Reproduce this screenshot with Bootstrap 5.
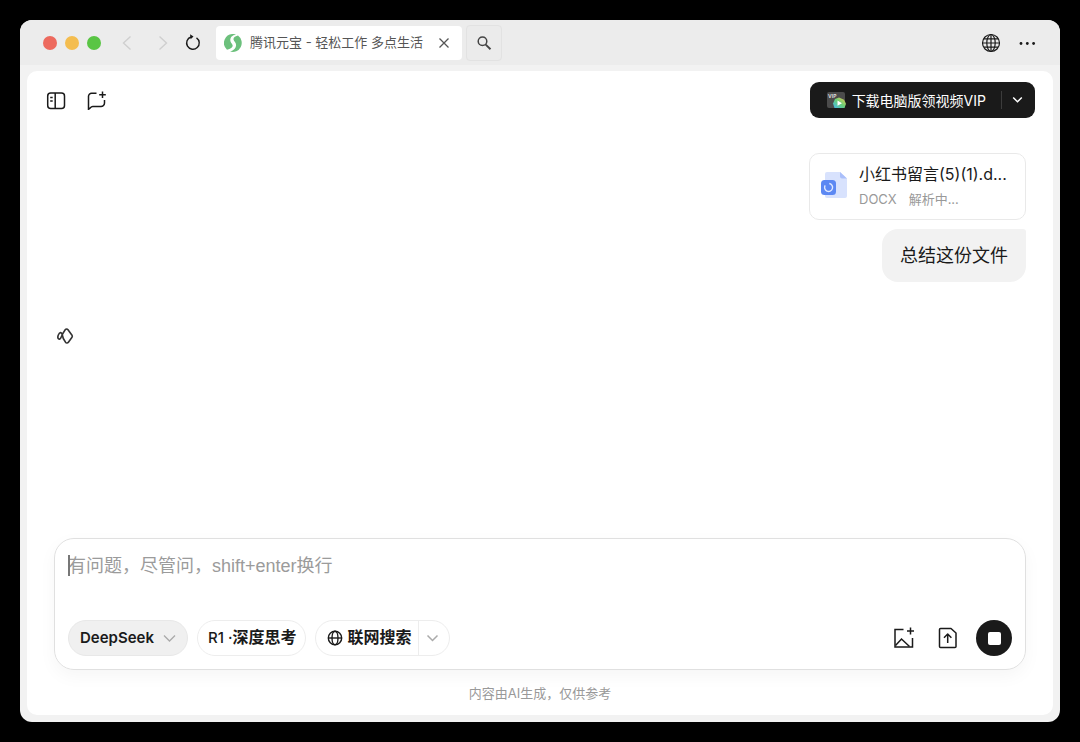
<!DOCTYPE html>
<html lang="zh-CN">
<head>
<meta charset="utf-8">
<meta name="viewport" content="width=device-width, initial-scale=1">
<title>腾讯元宝 - 轻松工作 多点生活</title>
<link href="https://cdn.jsdelivr.net/npm/bootstrap@5.3.0/dist/css/bootstrap.min.css" rel="stylesheet">
<style>
  body { background: #000; color: #1a1a1a; font-family: Inter, "Noto Sans CJK SC", sans-serif; }
  svg { display: block; fill: none; stroke: currentColor; flex: none; }
  svg.solid { stroke: none; }
  .desktop { padding: 20px; }
  .bare { background: none; border: 0; padding: 0; color: inherit; }
  .app-window { background: #f2f2f2; border-radius: 12px; overflow: hidden; }
  .title-bar { background: #ececec; height: 45px; padding: 0 23px; }
  .light { width: 14px; height: 14px; border-radius: 50%; }
  .light-close { background: #ed6a5e; }
  .light-min { background: #f4bd4f; }
  .light-max { background: #59c544; }
  .nav-off { color: #cfcfcf; }
  .tab-item { background: #fff; border-radius: 4px; height: 34px; width: 246px; padding: 0 10px 0 8px; margin-left: 15px; font-size: 13px; color: #555; }
  .search-btn { width: 36px; height: 36px; border: 1px solid #e2e2e2; border-radius: 4px; color: #444; background: #ebebeb; }
  .page-panel { background: #fff; border-radius: 10px; margin: 6px 7px 7px; }
  .page-head { padding: 11px 18px 0 19px; }
  .download { background: #1a1a1a; color: #fff; border-radius: 9px; height: 36px; font-family: Inter, "Noto Sans CJK SC", sans-serif; font-size: 14px; font-weight: 500; }
  .download-main { padding: 0 15px 0 16px; gap: 6px; }
  .download-more { border-left: 1px solid #3c3c3c; height: 18px; padding: 0 12px 0 10px; }
  .chat { padding: 35px 27px 0; }
  .file-card { width: 217px; height: 67px; border: 1px solid #e9e9e9; border-radius: 10px; padding: 0 11px 3px; gap: 11px; }
  .file-name { font-size: 16px; line-height: 24px; }
  .file-meta { font-size: 13px; line-height: 18px; color: #999; margin-top: 4px; gap: 12px; }
  .bubble { background: #f2f2f2; border-radius: 16px 3px 16px 16px; font-size: 18px; line-height: 27px; padding: 13px 18px; margin-top: 9px; }
  .thinking { margin: 45px 0 0 2px; color: #333; }
  .composer { margin: 0 27px; border: 1px solid #e0e0e0; border-radius: 20px; padding: 13px; box-shadow: 0 6px 18px rgba(0,0,0,.04); }
  .caret { left: 0; top: 3px; width: 2px; height: 21px; background: #777; }
  .prompt { border: 0; outline: 0; resize: none; padding: 0; height: 68px; font: 18px/28px "Liberation Sans", "Noto Sans CJK SC", sans-serif; color: #1a1a1a; }
  .prompt::placeholder { color: #9b9b9b; opacity: 1; }
  .pill-row { gap: 9px; }
  .pill { height: 36px; border: 1px solid #ededed; border-radius: 18px; font-size: 15px; font-weight: 600; color: #1a1a1a; background: #fff; }
  .pill-text { font-size: 16px; font-family: "Liberation Sans", "Noto Sans CJK SC", sans-serif; }
  .pill-latin { font-family: Inter, sans-serif; font-size: 15px; font-weight: 500; }
  .pill-model { background: #f0f0f0; border-color: #e8e8e8; padding: 0 11px; gap: 9px; }
  .pill-think { padding: 0 9px 0 10px; }
  .pill-web { padding: 0 6px 0 11px; gap: 4px; }
  .pill-more { border-left: 1px solid #ededed; padding: 0 10px 0 7px; }
  .faint { color: #aaa; }
  .stop { width: 36px; height: 36px; border-radius: 50%; background: #1a1a1a; }
  .stop-mark { width: 13px; height: 13px; border-radius: 2px; background: #fff; }
  .note { font-size: 13px; line-height: 20px; color: #999; padding: 13px 0 12px; }
</style>
</head>
<body>
<div class="desktop min-vh-100 d-flex flex-column">
<div class="app-window flex-grow-1 d-flex flex-column">
  <header class="title-bar d-flex align-items-center">
    <div class="d-flex gap-2">
      <span class="light light-close"></span><span class="light light-min"></span><span class="light light-max"></span>
    </div>
    <nav class="d-flex align-items-center ms-3">
      <button class="bare nav-off ms-1" aria-label="后退"><svg width="12" height="16" stroke-width="1.4"><path d="M9.500 1.500 2.500 8l7 6.500"/></svg></button>
      <button class="bare nav-off ms-4" aria-label="前进"><svg width="12" height="16" stroke-width="1.4"><path d="m2.500 1.500 7 6.500-7 6.500"/></svg></button>
      <button class="bare ms-3" aria-label="刷新"><svg width="16" height="18" stroke-width="1.4"><path d="M11.500 3.800A6.300 6.300 0 1 1 6 3"/><path d="M5 .3 8.500 2.500 5.700 5.300z" fill="currentColor" stroke="none"/></svg></button>
    </nav>
    <div class="tab-item d-flex align-items-center">
      <svg class="solid" width="18" height="18" viewBox="0 0 18 18"><path d="M9.500 0A9 9 0 0 0 3 15.700C7 14.500 9 13 8.600 11.200 8.200 9.500 6.200 8.500 6.300 6 6.400 3.500 8 1.500 12 .6A9 9 0 0 0 9.500 0z" fill="#6cc07c"/><path d="M14 1.600C10.500 2.400 9.300 4 9.500 5.500c.3 1.800 2.700 2.800 2.600 5.700-.1 3-2.200 5-6 6.300A9 9 0 0 0 14 1.600z" fill="#6cc07c"/></svg>
      <span class="flex-grow-1 text-nowrap ms-2">腾讯元宝 - 轻松工作 多点生活</span>
      <button class="bare" aria-label="关闭标签页"><svg width="16" height="16" stroke-width="1.3"><path d="m3.500 3.500 9 9m0-9-9 9"/></svg></button>
    </div>
    <button class="search-btn d-flex align-items-center justify-content-center p-0 ms-1" aria-label="搜索"><svg width="16" height="16" stroke-width="1.500"><circle cx="6.500" cy="6.300" r="4.300"/><path d="m9.700 9.600 4.800 4.700" stroke-width="1.900"/></svg></button>
    <div class="ms-auto d-flex align-items-center gap-3">
      <button class="bare" aria-label="语言"><svg width="20" height="20" viewBox="0 0 20 20" stroke-width="1.200"><circle cx="10" cy="10" r="8.500"/><ellipse cx="10" cy="10" rx="4.200" ry="8.500"/><path d="M10 1.500v17M1.500 10h17M3 5.800h14M3 14.200h14"/></svg></button>
      <button class="bare" aria-label="更多"><svg class="solid" width="20" height="20"><g fill="currentColor"><circle cx="4" cy="10.500" r="1.400"/><circle cx="10.300" cy="10.500" r="1.400"/><circle cx="16.600" cy="10.500" r="1.400"/></g></svg></button>
    </div>
  </header>

  <main class="page-panel flex-grow-1 d-flex flex-column">
    <div class="page-head d-flex align-items-center">
      <button class="bare" aria-label="侧边栏"><svg width="20" height="22" viewBox="0 0 20 22" stroke-width="1.500"><rect x="1.700" y="4" width="16.800" height="15.500" rx="3"/><path d="M9.200 4v15.500M4.200 8.500h2.500M4.200 12h2.500"/></svg></button>
      <button class="bare ms-3" aria-label="新建对话"><svg class="ms-1" width="22" height="22" viewBox="0 0 22 22" stroke-width="1.500"><path d="M10.500 4.300H5.500a3 3 0 0 0-3 3V20.300c1.500-.1 2-2.800 4.200-2.800H15a3.500 3.500 0 0 0 3.500-3.500v-3"/><path d="M16.500 2.500v6.500M13.200 5.700h6.600"/></svg></button>
      <div class="download d-flex align-items-center ms-auto">
        <button class="bare download-main d-flex align-items-center">
          <svg class="solid" width="20" height="18" viewBox="0 0 20 18"><defs><linearGradient id="play" x1="0" y1="1" x2="1" y2="0"><stop stop-color="#45b8ef"/><stop offset=".5" stop-color="#68cf78"/><stop offset="1" stop-color="#f1c84c"/></linearGradient></defs><rect x="1" y="1" width="18" height="16" rx="2" fill="#4b4b4b"/><text x="2" y="6.500" font-size="5" font-weight="700" fill="#ddd">VIP</text><path d="m13 6.500 5 2.200 2 4-1.500 4.300H8.500L7 12.500l2-4.500z" fill="url(#play)"/><path d="m11.500 9.500 4.500 2.700-4.500 2.600z" fill="#fff"/></svg>
          <span class="text-nowrap">下载电脑版领视频VIP</span>
        </button>
        <button class="bare download-more d-flex align-items-center" aria-label="更多下载选项"><svg width="11" height="8" stroke-width="1.500"><path d="m1.200 1.500 4.300 4.300 4.300-4.300"/></svg></button>
      </div>
    </div>

    <section class="chat flex-grow-1 d-flex flex-column">
      <div class="file-card d-flex align-items-center align-self-end">
        <svg class="solid" width="27" height="28" viewBox="0 0 27 28"><path d="M6 1h13l7 6.500V25a2 2 0 0 1-2 2H6a2 2 0 0 1-2-2V3a2 2 0 0 1 2-2z" fill="#d8e2fd"/><path d="m19 1 7 6.500h-5a2 2 0 0 1-2-2z" fill="#aabffa"/><rect y="9" width="15" height="15" rx="3.500" fill="#5c88f3"/><path d="M8.300 12.500a4 4 0 1 1-4.100 1.800" stroke="#dfe8ff" stroke-width="1.400"/></svg>
        <div class="text-nowrap">
          <div class="file-name">小红书留言(5)(1).d...</div>
          <div class="file-meta d-flex"><span>DOCX</span><span>解析中...</span></div>
        </div>
      </div>
      <div class="bubble align-self-end">总结这份文件</div>
      <svg class="thinking" width="18" height="18" viewBox="0 0 18 18" stroke-width="1.600" stroke-linejoin="round"><path d="M6.300 8C5.500 4.500 3.500 5 2.200 8.200.900 11.800 3.600 13.800 5 10.500 6.500 7 8 4.500 9.200 2.800c.8-1.100 2-1.100 2.800 0l4 5.400c.5.800.5 1.300 0 2l-3.600 5c-.9 1.200-2.200 1-3-.1C7.500 12.800 6.700 10.500 6.300 8z"/></svg>
    </section>

    <form class="composer">
      <div class="d-flex position-relative">
        <textarea class="prompt flex-grow-1" aria-label="输入问题" placeholder="有问题，尽管问，shift+enter换行"></textarea>
        <span class="caret position-absolute"></span>
      </div>
      <div class="pill-row d-flex align-items-center">
        <button type="button" class="pill pill-model d-flex align-items-center"><span>DeepSeek</span><svg class="faint" width="13" height="9" stroke-width="1.300"><path d="m1 1.500 5.500 5.500L12 1.500"/></svg></button>
        <button type="button" class="pill pill-think pill-text text-nowrap"><span class="pill-latin">R1 ·</span>深度思考</button>
        <div class="pill pill-text d-flex">
          <button type="button" class="bare pill-web d-flex align-items-center text-nowrap"><svg width="16" height="16" viewBox="0 0 16 16" stroke-width="1.400"><circle cx="8" cy="8" r="6.700"/><ellipse cx="8" cy="8" rx="3" ry="6.700"/><path d="M1.300 8h13.400"/></svg><span class="fw-bold">联网搜索</span></button>
          <button type="button" class="bare pill-more d-flex align-items-center" aria-label="搜索选项"><svg class="faint" width="13" height="9" stroke-width="1.500"><path d="m1.500 1.500 5 5 5-5"/></svg></button>
        </div>
        <div class="d-flex align-items-center ms-auto">
          <button type="button" class="bare" aria-label="添加图片"><svg width="24" height="24" viewBox="0 0 24 24" stroke-width="1.500"><path d="M11.500 3.500H3v17.500H20.500V12"/><path d="m3.500 19.500 6-6.500 8 7.500M18.500 1.500v7M15 5h7"/></svg></button>
          <button type="button" class="bare ms-3" aria-label="上传文件"><svg class="ms-1" width="24" height="24" viewBox="0 0 24 24" stroke-width="1.500" stroke-linejoin="round"><path d="M4.500 2.500h10.500l5 4.500V20.500a1 1 0 0 1-1 1H4.500a1 1 0 0 1-1-1V3.500a1 1 0 0 1 1-1z"/><path d="M11.700 17V8m-3.700 3.700L11.700 8l3.700 3.700"/></svg></button>
          <button type="button" class="bare stop d-flex align-items-center justify-content-center ms-3" aria-label="停止"><span class="stop-mark"></span></button>
        </div>
      </div>
    </form>
    <footer class="note text-center">内容由AI生成，仅供参考</footer>
  </main>
</div>
</div>
<script src="https://cdn.jsdelivr.net/npm/bootstrap@5.3.0/dist/js/bootstrap.bundle.min.js"></script>
</body>
</html>
